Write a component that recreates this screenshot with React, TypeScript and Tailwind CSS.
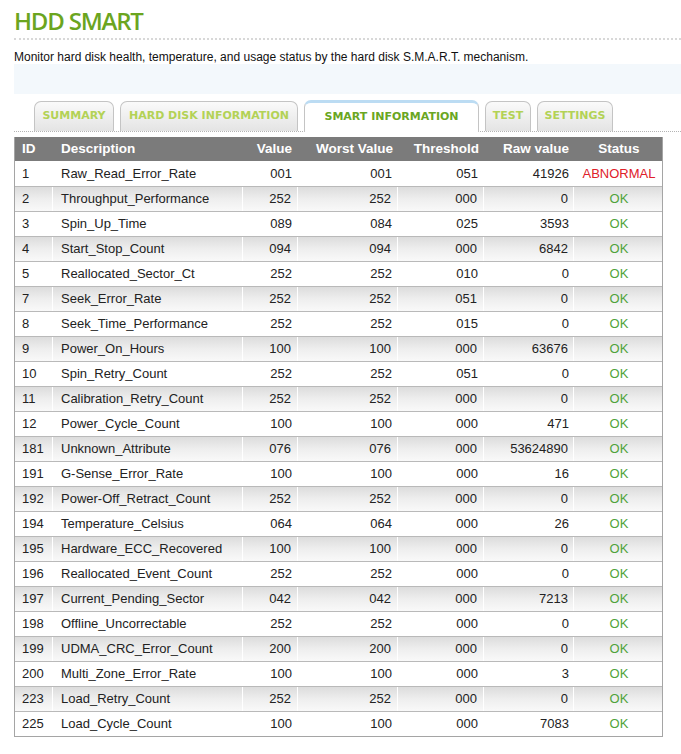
import React from 'react';

type Attr = {
    id: string;
    name: string;
    value: string;
    worst: string;
    threshold: string;
    raw: string;
    status: 'OK' | 'ABNORMAL';
};

const ATTRIBUTES: Attr[] = [
    { id: '1', name: 'Raw_Read_Error_Rate', value: '001', worst: '001', threshold: '051', raw: '41926', status: 'ABNORMAL' },
    { id: '2', name: 'Throughput_Performance', value: '252', worst: '252', threshold: '000', raw: '0', status: 'OK' },
    { id: '3', name: 'Spin_Up_Time', value: '089', worst: '084', threshold: '025', raw: '3593', status: 'OK' },
    { id: '4', name: 'Start_Stop_Count', value: '094', worst: '094', threshold: '000', raw: '6842', status: 'OK' },
    { id: '5', name: 'Reallocated_Sector_Ct', value: '252', worst: '252', threshold: '010', raw: '0', status: 'OK' },
    { id: '7', name: 'Seek_Error_Rate', value: '252', worst: '252', threshold: '051', raw: '0', status: 'OK' },
    { id: '8', name: 'Seek_Time_Performance', value: '252', worst: '252', threshold: '015', raw: '0', status: 'OK' },
    { id: '9', name: 'Power_On_Hours', value: '100', worst: '100', threshold: '000', raw: '63676', status: 'OK' },
    { id: '10', name: 'Spin_Retry_Count', value: '252', worst: '252', threshold: '051', raw: '0', status: 'OK' },
    { id: '11', name: 'Calibration_Retry_Count', value: '252', worst: '252', threshold: '000', raw: '0', status: 'OK' },
    { id: '12', name: 'Power_Cycle_Count', value: '100', worst: '100', threshold: '000', raw: '471', status: 'OK' },
    { id: '181', name: 'Unknown_Attribute', value: '076', worst: '076', threshold: '000', raw: '53624890', status: 'OK' },
    { id: '191', name: 'G-Sense_Error_Rate', value: '100', worst: '100', threshold: '000', raw: '16', status: 'OK' },
    { id: '192', name: 'Power-Off_Retract_Count', value: '252', worst: '252', threshold: '000', raw: '0', status: 'OK' },
    { id: '194', name: 'Temperature_Celsius', value: '064', worst: '064', threshold: '000', raw: '26', status: 'OK' },
    { id: '195', name: 'Hardware_ECC_Recovered', value: '100', worst: '100', threshold: '000', raw: '0', status: 'OK' },
    { id: '196', name: 'Reallocated_Event_Count', value: '252', worst: '252', threshold: '000', raw: '0', status: 'OK' },
    { id: '197', name: 'Current_Pending_Sector', value: '042', worst: '042', threshold: '000', raw: '7213', status: 'OK' },
    { id: '198', name: 'Offline_Uncorrectable', value: '252', worst: '252', threshold: '000', raw: '0', status: 'OK' },
    { id: '199', name: 'UDMA_CRC_Error_Count', value: '200', worst: '200', threshold: '000', raw: '0', status: 'OK' },
    { id: '200', name: 'Multi_Zone_Error_Rate', value: '100', worst: '100', threshold: '000', raw: '3', status: 'OK' },
    { id: '223', name: 'Load_Retry_Count', value: '252', worst: '252', threshold: '000', raw: '0', status: 'OK' },
    { id: '225', name: 'Load_Cycle_Count', value: '100', worst: '100', threshold: '000', raw: '7083', status: 'OK' },
];

const TABS = [
    { label: 'SUMMARY', width: 'w-[80px]' },
    { label: 'HARD DISK INFORMATION', width: 'w-[178px]' },
    { label: 'SMART INFORMATION', width: 'w-[175px]', active: true },
    { label: 'TEST', width: 'w-[46px]' },
    { label: 'SETTINGS', width: 'w-[76px]' },
];

const GRID = 'grid grid-cols-[38px_190px_55px_100px_86px_90px_90px]';

const Tabs: React.FC = () => (
    <div className="flex items-end gap-[6px] pl-[20px] h-[32px] border-b border-dotted border-[#b4b4b4] font-['DejaVu_Sans',sans-serif] text-[11px] font-bold">
        {TABS.map(tab =>
            tab.active ? (
                <div
                    key={tab.label}
                    className={`${tab.width} h-[32px] -mb-px flex items-center justify-center rounded-t-[7px] border border-b-0 border-[#c4c4c4] border-t-[3px] border-t-[#bcdcf3] bg-white text-[#6aa622]`}
                >
                    {tab.label}
                </div>
            ) : (
                <div
                    key={tab.label}
                    className={`${tab.width} h-[30px] flex items-center justify-center rounded-t-[7px] border border-b-0 border-[#c4c4c4] bg-gradient-to-b from-[#fafafa] to-[#e4e4e4] text-[#b3d256]`}
                >
                    {tab.label}
                </div>
            )
        )}
    </div>
);

const SmartTable: React.FC = () => (
    <div className="w-[649px] border-x border-b border-[#a5a5a5] font-['Liberation_Sans',Arial,sans-serif] text-[13px]">
        <div className={`${GRID} h-[24px] items-center bg-[#7b7b7b] text-white font-bold text-[13.5px]`}>
            <div className="pl-[7px]">ID</div>
            <div className="pl-[8px]">Description</div>
            <div className="text-right pr-[6px]">Value</div>
            <div className="text-right pr-[5px]">Worst Value</div>
            <div className="text-right pr-[5px]">Threshold</div>
            <div className="text-right pr-[5px]">Raw value</div>
            <div className="text-center">Status</div>
        </div>
        {ATTRIBUTES.map((row, index) => {
            const shaded = index % 2 === 1;
            const cell = shaded ? 'h-full flex items-center border-r border-white' : 'h-full flex items-center';
            return (
                <div
                    key={row.id}
                    className={`${GRID} h-[25px] text-[#222] ${index > 0 ? 'border-t border-[#b9b9b9]' : ''} ${shaded ? 'bg-gradient-to-b from-[#dcdcdc] via-[#eeeeee] to-[#f9f9f9]' : 'bg-white'}`}
                >
                    <div className={`${cell} pl-[7px]`}>{row.id}</div>
                    <div className={`${cell} pl-[8px]`}>{row.name}</div>
                    <div className={`${cell} justify-end pr-[6px]`}>{row.value}</div>
                    <div className={`${cell} justify-end pr-[6px]`}>{row.worst}</div>
                    <div className={`${cell} justify-end pr-[6px]`}>{row.threshold}</div>
                    <div className={`${cell} justify-end pr-[5px]`}>{row.raw}</div>
                    <div className="h-full flex items-center justify-center">
                        <span className={row.status === 'OK' ? 'text-[#4fa33a]' : 'text-[#e0202a]'}>{row.status}</span>
                    </div>
                </div>
            );
        })}
    </div>
);

export default function App() {
    return (
        <div className="w-[681px] min-h-[754px] bg-white pl-[14px] pt-[6px]">
            <h1 className="font-['Open_Sans',sans-serif] text-[24px] font-semibold leading-[30px] tracking-[-1.2px] text-[#6ba51f]">
                HDD SMART
            </h1>
            <div className="mt-[2px] border-b-2 border-dotted border-[#d8d8d8]" />
            <p className="mt-[11px] font-['Liberation_Sans',Arial,sans-serif] text-[12px] leading-[13px] text-[#111]">
                Monitor hard disk health, temperature, and usage status by the hard disk S.M.A.R.T. mechanism.
            </p>
            <div className="h-[30px] bg-[#f3f8fc]" />
            <div className="mt-[6px]">
                <Tabs />
            </div>
            <div className="mt-[5px]">
                <SmartTable />
            </div>
        </div>
    );
}
